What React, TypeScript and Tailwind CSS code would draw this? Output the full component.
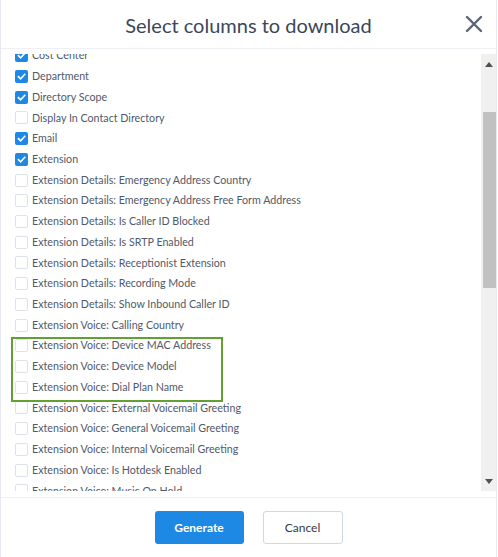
import React from "react";

type Col = { label: string; checked?: boolean };

const columns: Col[] = [
  { label: "Cost Center", checked: true },
  { label: "Department", checked: true },
  { label: "Directory Scope", checked: true },
  { label: "Display In Contact Directory" },
  { label: "Email", checked: true },
  { label: "Extension", checked: true },
  { label: "Extension Details: Emergency Address Country" },
  { label: "Extension Details: Emergency Address Free Form Address" },
  { label: "Extension Details: Is Caller ID Blocked" },
  { label: "Extension Details: Is SRTP Enabled" },
  { label: "Extension Details: Receptionist Extension" },
  { label: "Extension Details: Recording Mode" },
  { label: "Extension Details: Show Inbound Caller ID" },
  { label: "Extension Voice: Calling Country" },
  { label: "Extension Voice: Device MAC Address" },
  { label: "Extension Voice: Device Model" },
  { label: "Extension Voice: Dial Plan Name" },
  { label: "Extension Voice: External Voicemail Greeting" },
  { label: "Extension Voice: General Voicemail Greeting" },
  { label: "Extension Voice: Internal Voicemail Greeting" },
  { label: "Extension Voice: Is Hotdesk Enabled" },
  { label: "Extension Voice: Music On Hold" },
  { label: "Extension Voice: Outbound Caller ID" },
];

function Box({ checked }: { checked?: boolean }) {
  if (checked) {
    return (
      <span className="flex h-[13px] w-[13px] shrink-0 items-center justify-center rounded-[2px] bg-[#1e88e5]">
        <svg width="9" height="9" viewBox="0 0 10 10">
          <path d="M1.6 5.2 L4 7.5 L8.6 2.6" fill="none" stroke="#fff" strokeWidth="1.8" strokeLinecap="square" />
        </svg>
      </span>
    );
  }
  return <span className="block h-[13px] w-[13px] shrink-0 rounded-[2px] border border-[#dde2ea] bg-white" />;
}

export default function App() {
  return (
    <div className="h-[557px] w-[498px] bg-white">
      <div className="flex h-[557px] w-[497px] flex-col border-x border-[#e6e9f0] bg-white font-['Lato','Liberation_Sans',sans-serif]">
        {/* header */}
        <div className="grid h-[49px] shrink-0 grid-cols-[1fr_auto_1fr] items-center border-b border-[#eef0f5]">
          <div />
          <h2 className="pt-[1px] text-[20px] leading-none text-[#3b4759]">Select columns to download</h2>
          <div className="flex justify-end pr-[13px]">
            <svg width="18" height="18" viewBox="0 0 18 18">
              <path d="M2 2 L16 16 M16 2 L2 16" stroke="#5a6577" strokeWidth="2.4" strokeLinecap="round" />
            </svg>
          </div>
        </div>

        {/* column list */}
        <div className="pt-[5px] pb-[6px]">
          <div className="flex h-[437px]">
            <div className="relative flex-1 overflow-hidden">
              <ul className="-mt-[8.6px] pl-[14px]">
                {columns.map((c) => (
                  <li key={c.label} className="flex h-[20.72px] items-center gap-[4px]">
                    <Box checked={c.checked} />
                    <span className="whitespace-nowrap text-[10.7px] leading-none text-[#505969]">{c.label}</span>
                  </li>
                ))}
              </ul>
              <div className="pointer-events-none absolute left-[10px] top-[283px] h-[65px] w-[212px] border-2 border-[#62a032]" />
            </div>
            {/* scrollbar */}
            <div className="flex w-[15px] flex-col bg-[#f0f0f0]">
              <div className="flex h-[16px] items-center justify-center pt-[4px]">
                <svg width="8" height="5" viewBox="0 0 8 5"><path d="M0 5 L4 0 L8 5 Z" fill="#505050" /></svg>
              </div>
              <div className="flex flex-1 flex-col">
                <div className="h-[42px]" />
                <div className="ml-[2px] h-[176px] w-[13px] bg-[#c1c1c1]" />
              </div>
              <div className="flex h-[16px] items-center justify-center pb-[3px]">
                <svg width="8" height="5" viewBox="0 0 8 5"><path d="M0 0 L8 0 L4 5 Z" fill="#505050" /></svg>
              </div>
            </div>
          </div>
        </div>

        {/* footer */}
        <div className="flex flex-1 justify-center gap-[19px] border-t border-[#eef0f5] pt-[13px]">
          <button className="h-[33px] w-[89px] rounded-[3px] bg-[#1e88e5] text-[12px] font-bold text-white">Generate</button>
          <button className="h-[33px] w-[80px] rounded-[3px] border border-[#cfd8e3] bg-white text-[12px] text-[#333a45]">Cancel</button>
        </div>
      </div>
    </div>
  );
}
